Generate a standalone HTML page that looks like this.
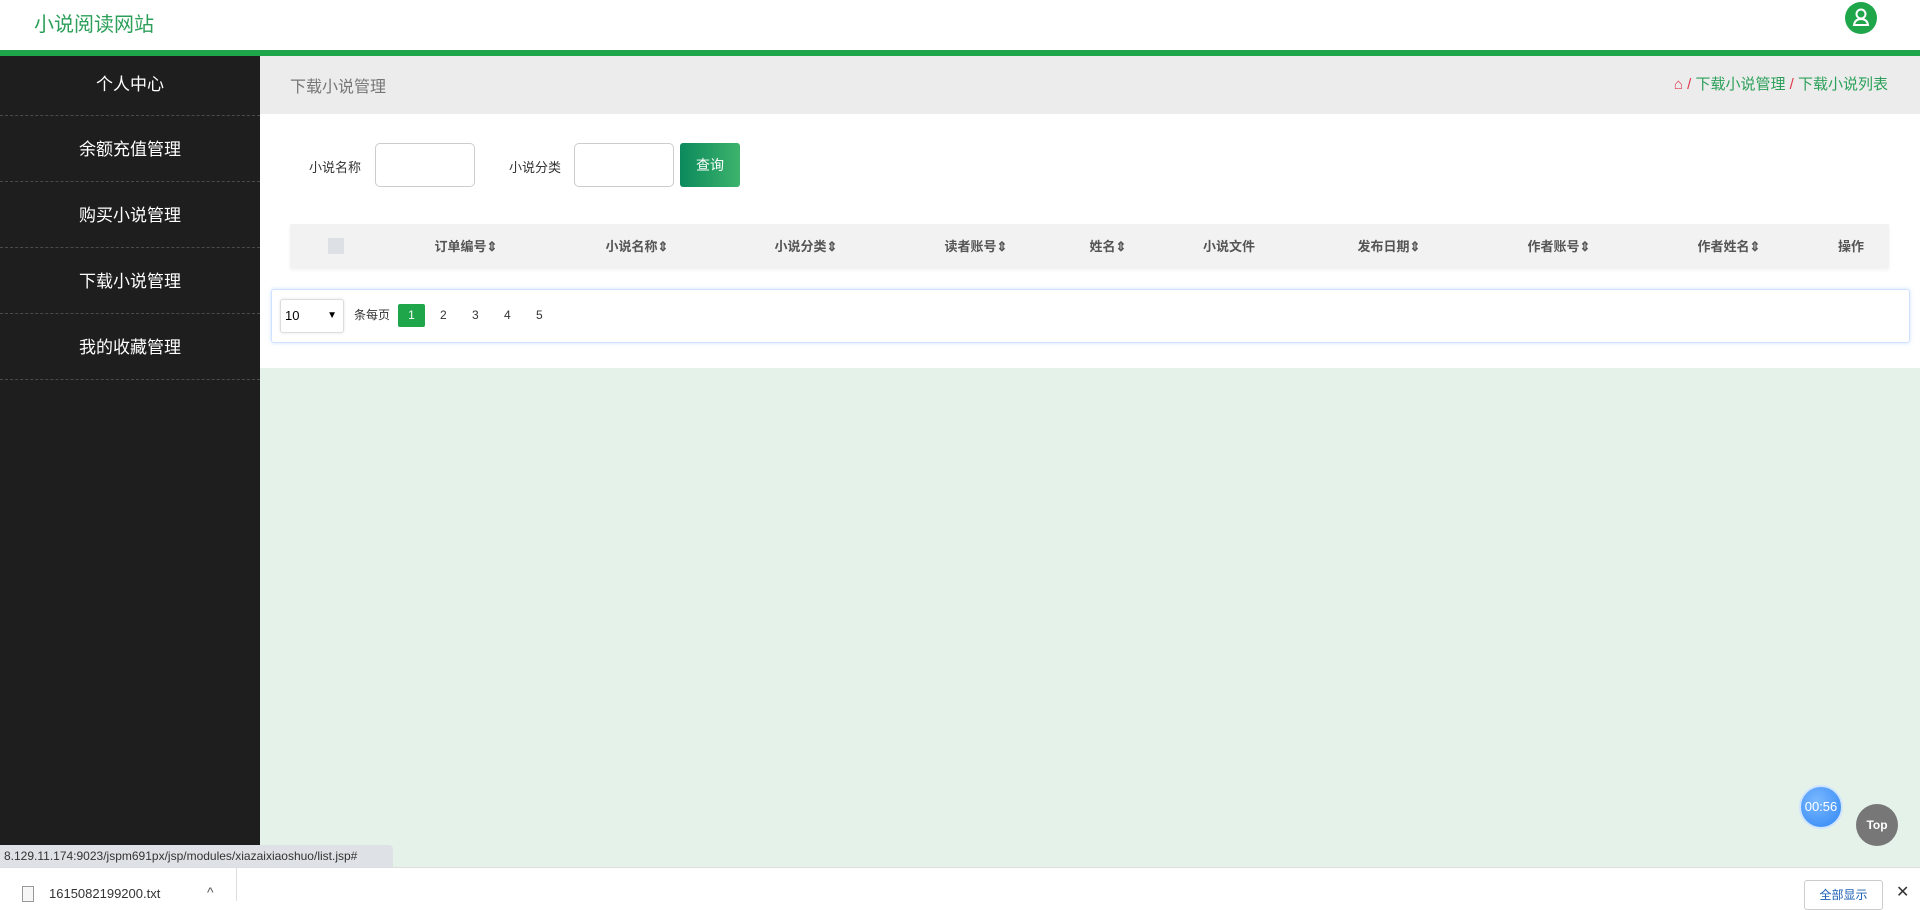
<!DOCTYPE html>
<html><head><meta charset="utf-8"><style>
*{margin:0;padding:0;box-sizing:border-box}
body{width:1920px;height:900px;overflow:hidden;position:relative;font-family:"Liberation Sans","Noto Sans CJK SC",sans-serif;background:#fff}
.a{position:absolute}
.hdr{left:0;top:0;width:1920px;height:50px;background:#fff}
.bar{left:0;top:50px;width:1920px;height:6px;background:#1fa64b}
.logo{left:34px;top:8px;font-size:20px;color:#2ca05a}
.av{left:1845px;top:2px;width:32px;height:32px;border-radius:50%;background:#1fa64b}
.side{left:0;top:56px;width:260px;height:811px;background:#1e1e1e}
.it{position:absolute;left:0;width:260px;height:66px;border-bottom:1px dashed #4a4a4a;color:#fff;font-size:17px;text-align:center;line-height:68px}
.ch{left:260px;top:56px;width:1660px;height:58px;background:#ececec}
.ttl{left:290px;top:73px;font-size:16px;color:#777}
.bc{right:32px;top:73px;font-size:15px;color:#2ca05a}
.bc span{color:#e0384b}
.lbl{font-size:13px;color:#333;top:157px}
.inp{top:143px;width:100px;height:44px;border:1px solid #ccc;border-radius:5px;background:#fff}
.btn{left:680px;top:143px;width:60px;height:44px;border-radius:3px;background:linear-gradient(90deg,#0b8a5c,#3db36c);color:#fff;font-size:14px;text-align:center;line-height:44px}
.th{left:290px;top:224px;width:1599px;height:44px;background:#f2f2f2;box-shadow:0 2px 4px rgba(0,0,0,.06)}
.col{position:absolute;top:0;line-height:46px;font-size:13px;font-weight:bold;color:#555;transform:translateX(-50%);white-space:nowrap}
.pg{left:271px;top:289px;width:1639px;height:54px;border:1px solid #cfe2ff;border-radius:3px;box-shadow:0 0 4px rgba(100,160,255,.3);background:#fff}
.sel{left:280px;top:299px;width:64px;height:34px;border:1px solid #ddd;border-radius:3px;background:#fff;font-size:13px;line-height:32px;padding-left:4px;box-shadow:0 0 3px rgba(0,0,0,.1)}
.pn{top:304px;font-size:12px;color:#333;line-height:23px}
.grn{left:260px;top:368px;width:1660px;height:499px;background:#e5f2ea}
.stat{left:0;top:845px;width:393px;height:22px;background:#dee1e6;font-size:12px;color:#333;line-height:22px;padding-left:4px;border-top-right-radius:4px}
.dl{left:0;top:867px;width:1920px;height:33px;background:#fff;border-top:1px solid #ddd}
</style></head><body>
<div class="a hdr"></div>
<div class="a logo">小说阅读网站</div>
<div class="a av"><svg width="32" height="32" viewBox="0 0 32 32"><circle cx="16" cy="12" r="4.5" fill="none" stroke="#fff" stroke-width="2"/><path d="M9 23 Q10 17 16 17 Q22 17 23 23 Z" fill="none" stroke="#fff" stroke-width="2"/></svg></div>
<div class="a bar"></div>
<div class="a side">
<div class="it" style="top:0;height:60px;line-height:58px">个人中心</div>
<div class="it" style="top:60px">余额充值管理</div>
<div class="it" style="top:126px">购买小说管理</div>
<div class="it" style="top:192px">下载小说管理</div>
<div class="it" style="top:258px">我的收藏管理</div>
</div>
<div class="a ch"></div>
<div class="a ttl">下载小说管理</div>
<div class="a bc"><span>⌂ / </span>下载小说管理<span> / </span>下载小说列表</div>
<div class="a lbl" style="left:309px">小说名称</div>
<div class="a inp" style="left:375px"></div>
<div class="a lbl" style="left:509px">小说分类</div>
<div class="a inp" style="left:574px"></div>
<div class="a btn">查询</div>
<div class="a th">
<div style="position:absolute;left:38px;top:14px;width:16px;height:16px;background:#dde0e4"></div>
<div class="col" style="left:176px">订单编号⇕</div>
<div class="col" style="left:347px">小说名称⇕</div>
<div class="col" style="left:516px">小说分类⇕</div>
<div class="col" style="left:686px">读者账号⇕</div>
<div class="col" style="left:818px">姓名⇕</div>
<div class="col" style="left:939px">小说文件</div>
<div class="col" style="left:1099px">发布日期⇕</div>
<div class="col" style="left:1269px">作者账号⇕</div>
<div class="col" style="left:1439px">作者姓名⇕</div>
<div class="col" style="left:1561px">操作</div>
</div>
<div class="a pg"></div>
<div class="a sel">10<span style="position:absolute;right:6px;font-size:10px">▼</span></div>
<div class="a pn" style="left:354px">条每页</div>
<div class="a pn" style="left:398px;width:27px;text-align:center;background:#1fa64b;color:#fff;border-radius:2px">1</div>
<div class="a pn" style="left:440px">2</div>
<div class="a pn" style="left:472px">3</div>
<div class="a pn" style="left:504px">4</div>
<div class="a pn" style="left:536px">5</div>
<div class="a grn"></div>
<div class="a" style="left:1799px;top:785px;width:44px;height:44px;border-radius:50%;background:radial-gradient(circle at 40% 35%,#7ab8ff,#2f86f5);border:2px solid #cfe4ff;color:#fff;font-size:13px;text-align:center;line-height:40px">00:56</div>
<div class="a" style="left:1856px;top:804px;width:42px;height:42px;border-radius:50%;background:#777;color:#fff;font-size:12px;font-weight:bold;text-align:center;line-height:42px">Top</div>
<div class="a stat">8.129.11.174:9023/jspm691px/jsp/modules/xiazaixiaoshuo/list.jsp#</div>
<div class="a dl">
<div class="a" style="left:22px;top:18px;width:12px;height:16px;border:1px solid #999;background:#f6f6f6"></div>
<div class="a" style="left:49px;top:18px;font-size:13px;color:#333">1615082199200.txt</div>
<div class="a" style="left:207px;top:16px;font-size:14px;color:#555">^</div>
<div class="a" style="left:236px;top:0;width:1px;height:33px;background:#ddd"></div>
<div class="a" style="left:1804px;top:12px;width:79px;height:30px;border:1px solid #ccc;border-radius:3px;font-size:12px;color:#1a5fb4;text-align:center;line-height:28px">全部显示</div>
<div class="a" style="left:1896px;top:14px;font-size:16px;color:#333">✕</div>
</div>
</body></html>
